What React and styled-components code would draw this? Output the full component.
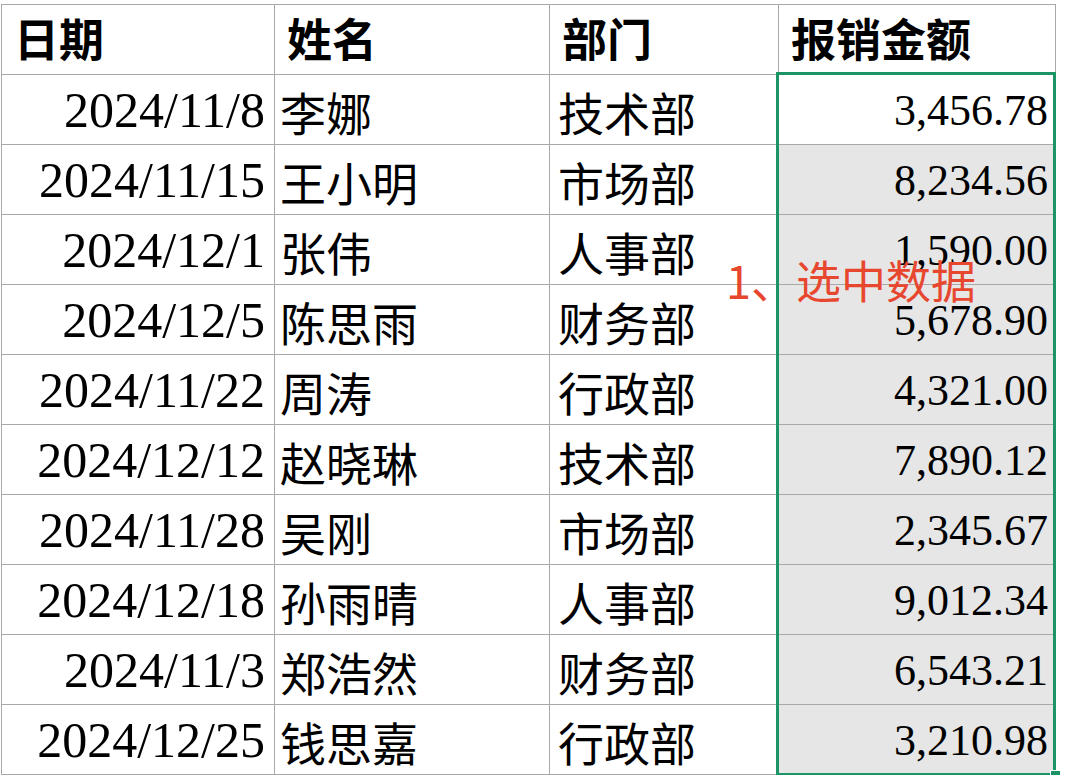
import styled, { createGlobalStyle } from 'styled-components';

const GlobalStyle = createGlobalStyle`
    html, body {
        margin: 0;
        padding: 0;
        background: #ffffff;
    }
`

const rows = [
    ['2024/11/8', '李娜', '技术部', '3,456.78'],
    ['2024/11/15', '王小明', '市场部', '8,234.56'],
    ['2024/12/1', '张伟', '人事部', '1,590.00'],
    ['2024/12/5', '陈思雨', '财务部', '5,678.90'],
    ['2024/11/22', '周涛', '行政部', '4,321.00'],
    ['2024/12/12', '赵晓琳', '技术部', '7,890.12'],
    ['2024/11/28', '吴刚', '市场部', '2,345.67'],
    ['2024/12/18', '孙雨晴', '人事部', '9,012.34'],
    ['2024/11/3', '郑浩然', '财务部', '6,543.21'],
    ['2024/12/25', '钱思嘉', '行政部', '3,210.98'],
];

function App() {
    return (
        <Page>
            <GlobalStyle />
            <Sheet>
                <Grid>
                    <Head>日期</Head>
                    <Head>姓名</Head>
                    <Head>部门</Head>
                    <Head>报销金额</Head>
                    {rows.map((r, i) => (
                        <Row key={i}>
                            <DateCell>{r[0]}</DateCell>
                            <TextCell>{r[1]}</TextCell>
                            <TextCell $pad={8}>{r[2]}</TextCell>
                            <AmountCell $active={i === 0}>{r[3]}</AmountCell>
                        </Row>
                    ))}
                </Grid>
                <Selection>
                    <Handle />
                </Selection>
                <Note>1、选中数据</Note>
            </Sheet>
        </Page>
    )
}

const Page = styled.div`
    padding: 4px 0 0 1px;
`

const Sheet = styled.div`
    position: relative;
    width: 1055px;
`

const Grid = styled.div`
    display: grid;
    grid-template-columns: 273px 275px 229px 277px;
    grid-auto-rows: 70px;
    border-top: 1px solid #a8a8a8;
    border-left: 1px solid #a8a8a8;
`

const Row = styled.div`
    display: contents;
`

const Cell = styled.div`
    display: flex;
    align-items: center;
    border-right: 1px solid #a8a8a8;
    border-bottom: 1px solid #a8a8a8;
    color: #000;
    overflow: hidden;
    white-space: nowrap;
`

const Head = styled(Cell)`
    padding: 0 0 4px 12px;
    font-family: "Noto Sans CJK SC", sans-serif;
    font-size: 45px;
    font-weight: 700;
`

const TextCell = styled(Cell)`
    padding: 2px 0 0 ${p => p.$pad || 5}px;
    font-family: "Noto Sans CJK SC", sans-serif;
    font-size: 46px;
`

const DateCell = styled(Cell)`
    justify-content: flex-end;
    padding: 0 9px 0 0;
    font-family: "Liberation Serif", serif;
    font-size: 50px;
`

const AmountCell = styled(Cell)`
    justify-content: flex-end;
    padding: 2px 7px 0 0;
    font-family: "Liberation Serif", serif;
    font-size: 44px;
    background: ${p => p.$active ? '#ffffff' : '#e6e6e6'};
`

const Selection = styled.div`
    position: absolute;
    left: 775px;
    top: 68px;
    width: 274px;
    height: 698px;
    border: 3px solid #1b9466;
    pointer-events: none;
`

const Handle = styled.div`
    position: absolute;
    right: -8px;
    bottom: -8px;
    width: 9px;
    height: 9px;
    background: #1b9466;
    border: 1px solid #ffffff;
`

const Note = styled.div`
    position: absolute;
    left: 725px;
    top: 253px;
    font-family: "Noto Sans CJK SC", sans-serif;
    font-size: 45px;
    line-height: 1;
    color: #e8472f;
`

export default App
